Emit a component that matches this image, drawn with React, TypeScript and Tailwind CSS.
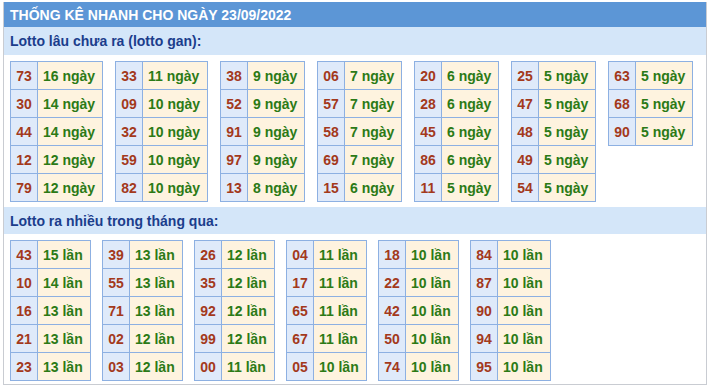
import React from "react";

type Item = [string, string];

const gan: Item[][] = [
  [["73", "16 ngày"], ["30", "14 ngày"], ["44", "14 ngày"], ["12", "12 ngày"], ["79", "12 ngày"]],
  [["33", "11 ngày"], ["09", "10 ngày"], ["32", "10 ngày"], ["59", "10 ngày"], ["82", "10 ngày"]],
  [["38", "9 ngày"], ["52", "9 ngày"], ["91", "9 ngày"], ["97", "9 ngày"], ["13", "8 ngày"]],
  [["06", "7 ngày"], ["57", "7 ngày"], ["58", "7 ngày"], ["69", "7 ngày"], ["15", "6 ngày"]],
  [["20", "6 ngày"], ["28", "6 ngày"], ["45", "6 ngày"], ["86", "6 ngày"], ["11", "5 ngày"]],
  [["25", "5 ngày"], ["47", "5 ngày"], ["48", "5 ngày"], ["49", "5 ngày"], ["54", "5 ngày"]],
  [["63", "5 ngày"], ["68", "5 ngày"], ["90", "5 ngày"]],
];

const nhieu: Item[][] = [
  [["43", "15 lần"], ["10", "14 lần"], ["16", "13 lần"], ["21", "13 lần"], ["23", "13 lần"]],
  [["39", "13 lần"], ["55", "13 lần"], ["71", "13 lần"], ["02", "12 lần"], ["03", "12 lần"]],
  [["26", "12 lần"], ["35", "12 lần"], ["92", "12 lần"], ["99", "12 lần"], ["00", "11 lần"]],
  [["04", "11 lần"], ["17", "11 lần"], ["65", "11 lần"], ["67", "11 lần"], ["05", "10 lần"]],
  [["18", "10 lần"], ["22", "10 lần"], ["42", "10 lần"], ["50", "10 lần"], ["74", "10 lần"]],
  [["84", "10 lần"], ["87", "10 lần"], ["90", "10 lần"], ["94", "10 lần"], ["95", "10 lần"]],
];

function Table({ rows, w }: { rows: Item[]; w: "wide" | "mid" | "narrow" }) {
  const valW = w === "wide" ? "w-[65px]" : w === "mid" ? "w-[57px]" : "w-[53px]";
  return (
    <div className="flex flex-col self-start border-l border-t border-[#8db0e2]">
      {rows.map(([n, v], i) => (
        <div key={i} className="flex h-[28px]">
          <div className="w-[27px] flex items-center justify-center bg-[#dfeafa] border-r border-b border-[#8db0e2] text-[#a3391c]">
            {n}
          </div>
          <div className={`${valW} flex items-center pl-[5px] bg-[#fef3df] border-r border-b border-[#8db0e2] text-[#2b7a16] whitespace-nowrap`}>
            {v}
          </div>
        </div>
      ))}
    </div>
  );
}

export default function App() {
  return (
    <div
      className="bg-white pl-[3px] pt-[2px] w-[713px] h-[390px]"
      style={{ fontFamily: '"Liberation Sans", Arial, sans-serif' }}
    >
      <div className="w-[704px] border-x border-b border-[#c9ccd2] pb-[3px] font-bold text-[14px] leading-none">
        <div className="h-[25px] bg-[#5c96d6] text-white flex items-center pl-[6px]">
          THỐNG KÊ NHANH CHO NGÀY 23/09/2022
        </div>
        <div className="h-[28px] bg-[#d4e6f9] text-[#1b3d8c] flex items-center pl-[6px]">
          Lotto lâu chưa ra (lotto gan):
        </div>
        <div className="flex gap-[12px] pl-[6px] pt-[6px] pb-[5px]">
          {gan.map((t, i) => (
            <Table key={i} rows={t} w={i < 2 ? "wide" : "mid"} />
          ))}
        </div>
        <div className="h-[27px] bg-[#d4e6f9] text-[#1b3d8c] flex items-center pl-[6px]">
          Lotto ra nhiều trong tháng qua:
        </div>
        <div className="flex gap-[11px] pl-[6px] pt-[6px]">
          {nhieu.map((t, i) => (
            <Table key={i} rows={t} w="narrow" />
          ))}
        </div>
      </div>
    </div>
  );
}
